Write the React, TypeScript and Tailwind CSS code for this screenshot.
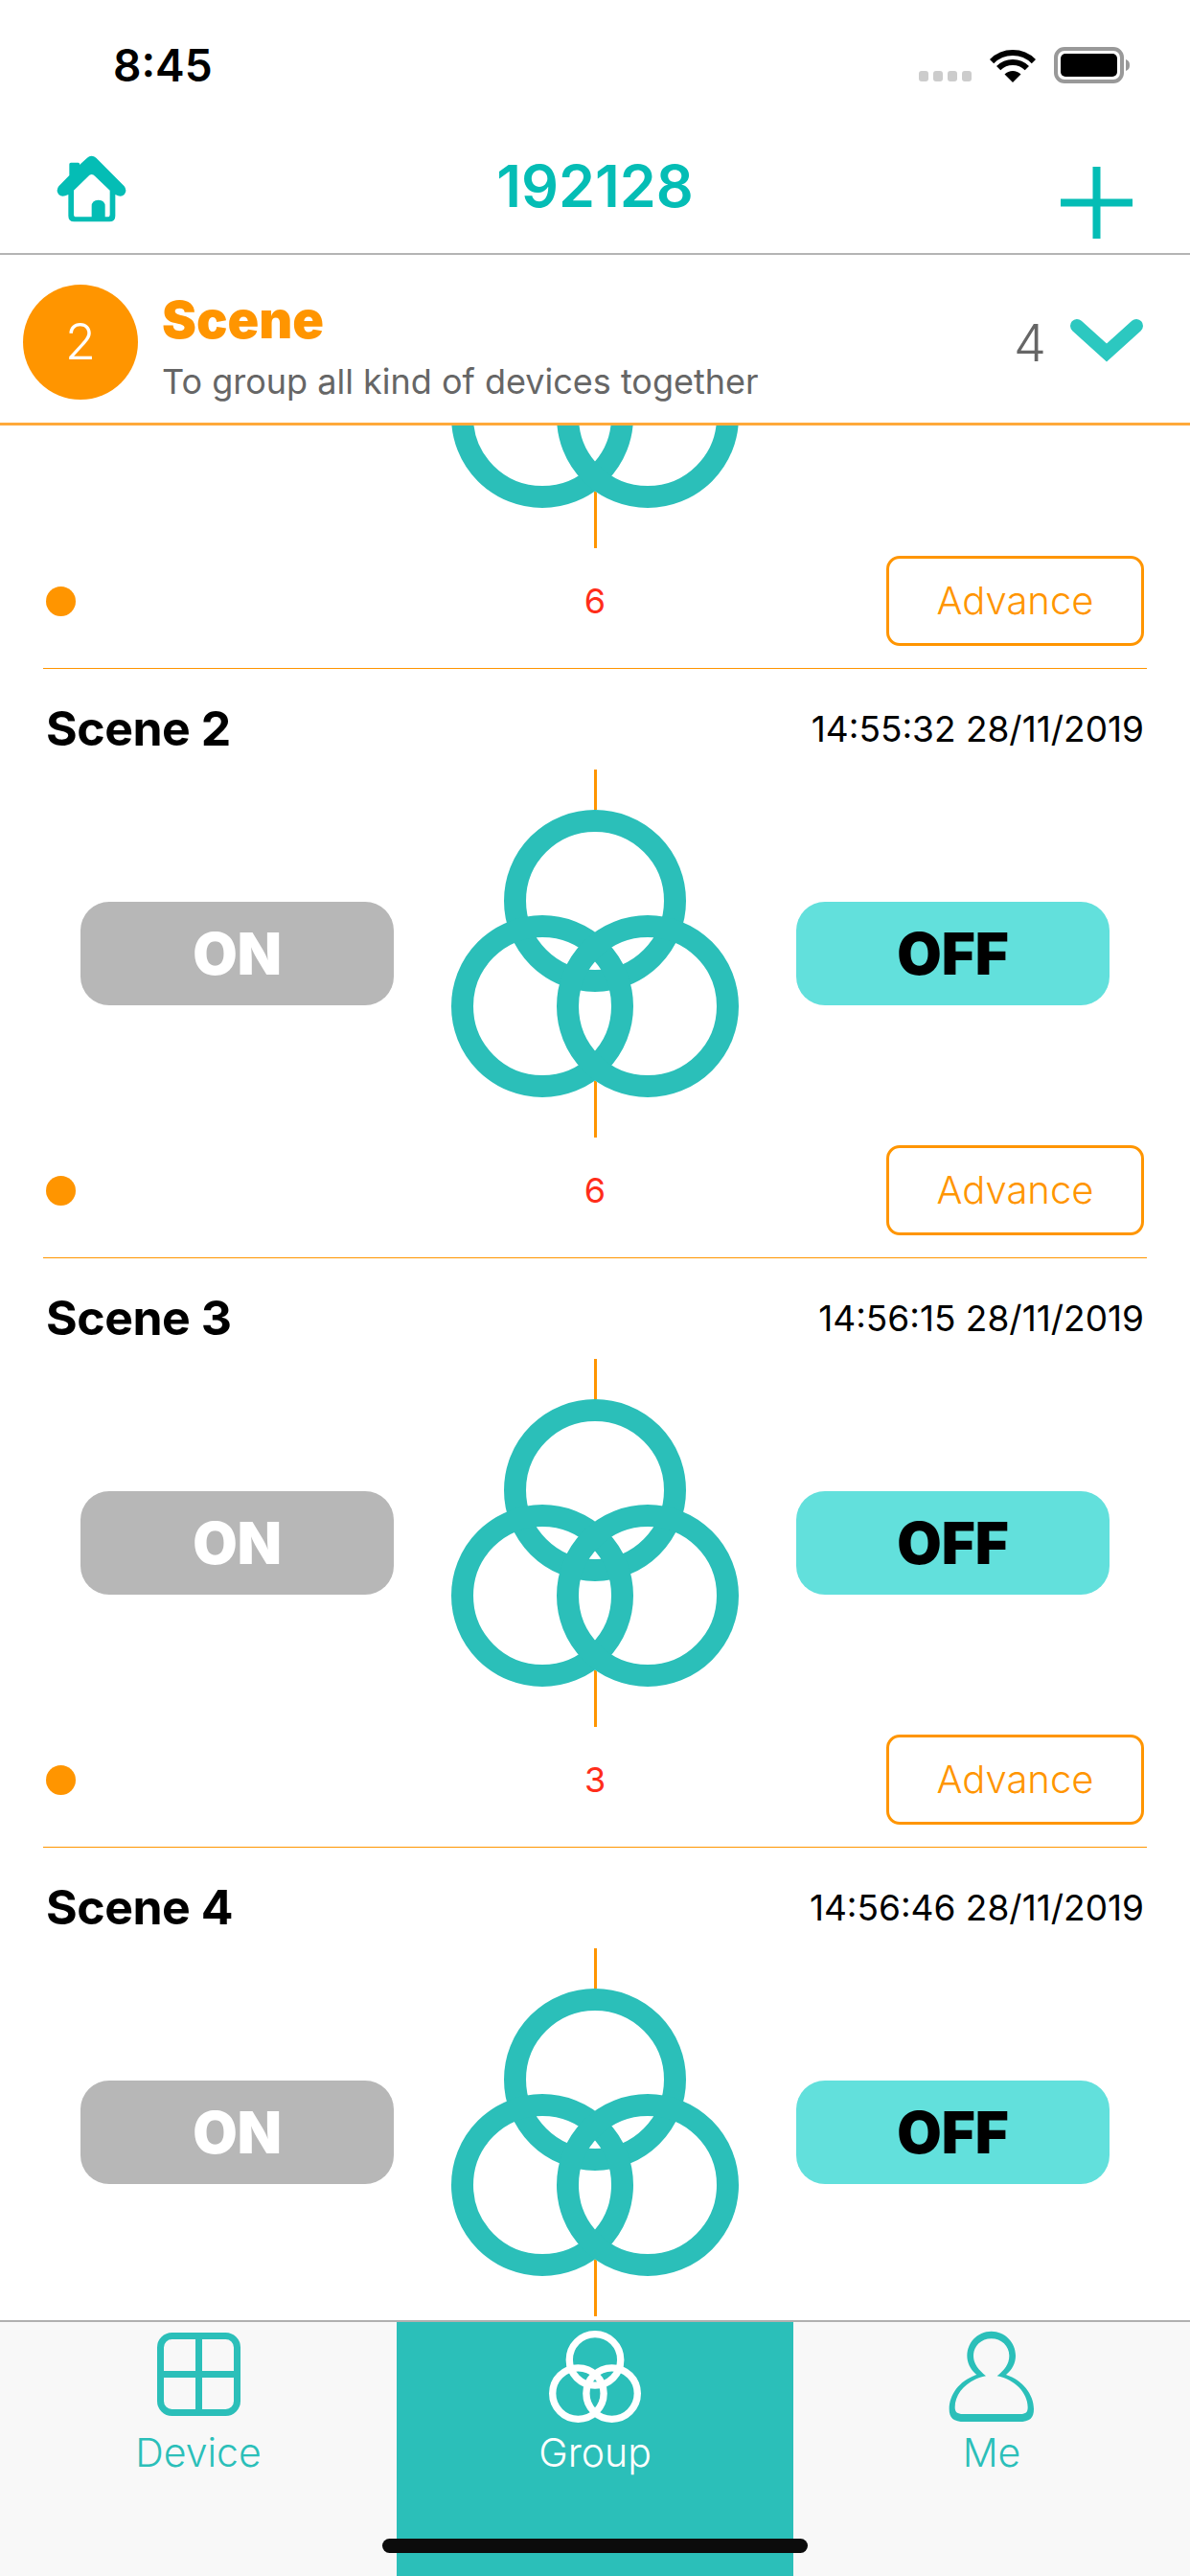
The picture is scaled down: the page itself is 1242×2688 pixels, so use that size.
import React from "react";

// the list is scrolled: the first row only shows its lower part, the last one its upper part
const scenes = [
  { name: "", time: "", count: 6, showHead: false, showFoot: true },
  { name: "Scene 2", time: "14:55:32 28/11/2019", count: 6, showHead: true, showFoot: true },
  { name: "Scene 3", time: "14:56:15 28/11/2019", count: 3, showHead: true, showFoot: true },
  { name: "Scene 4", time: "14:56:46 28/11/2019", count: 0, showHead: true, showFoot: false },
];

function Rings({ color, className }: { color: string; className?: string }) {
  return (
    <svg viewBox="0 0 300 300" fill="none" stroke={color} strokeWidth="23" className={className}>
      <circle cx="150" cy="95" r="83.5" />
      <circle cx="95" cy="205" r="83.5" />
      <circle cx="205" cy="205" r="83.5" />
    </svg>
  );
}

function StatusBar() {
  return (
    <div className="h-[135px] flex items-center justify-between pl-[118px] pr-[62px]">
      <span className="text-[46px] font-semibold text-black leading-none">8:45</span>
      <div className="flex items-center gap-[19px]">
        <div className="flex gap-[5px] mt-[24px]">
          {[0, 1, 2, 3].map((i) => (
            <div key={i} className="w-[10px] h-[11px] rounded-[3px] bg-[#cccccc]" />
          ))}
        </div>
        <svg viewBox="0 0 48 36" className="w-[48px] h-[36px]">
          <path d="M24 36 L15.5 27.5 A12 12 0 0 1 32.5 27.5Z" fill="#000" />
          <path d="M9.15 21.15 A21 21 0 0 1 38.85 21.15" fill="none" stroke="#000" strokeWidth="6" />
          <path d="M2.1 14.1 A31 31 0 0 1 45.9 14.1" fill="none" stroke="#000" strokeWidth="6" />
        </svg>
        <svg viewBox="0 0 80 38" className="w-[80px] h-[38px]">
          <rect x="2" y="2" width="69" height="34" rx="9" fill="none" stroke="#999999" strokeWidth="4" />
          <rect x="7" y="7" width="59" height="24" rx="5" fill="#000" />
          <path d="M75 13 C78 14 79 16 79 19 C79 22 78 24 75 25Z" fill="#999999" />
        </svg>
      </div>
    </div>
  );
}

function NavBar() {
  return (
    <div className="h-[131px] grid grid-cols-3 border-b-[2px] border-[#b4b4b4]">
      <div className="pl-[58px] pt-[27px]">
        <svg viewBox="85 95 225 210" className="w-[75px] h-[70px]">
          <path
            fillRule="evenodd"
            fill="#04bdb5"
            d="M198 97 Q190 97 184 103 L160 125 L160 122 Q160 118 155 118 L133 118 Q128 118 128 123 L128 158 L95 192 Q85 205 95 218 Q105 228 125 218 L125 285 Q125 303 143 303 L254 303 Q272 303 272 285 L272 218 Q290 228 300 218 Q310 205 300 192 L212 103 Q205 97 198 97Z M198 155 Q192 155 188 160 L142 205 L142 280 Q142 288 150 288 L198 288 L198 255 Q198 235 219 235 Q240 235 240 255 L240 288 L248 288 Q255 288 255 280 L255 205 L208 160 Q204 155 198 155Z"
          />
        </svg>
      </div>
      <div className="text-center text-[61px] font-semibold text-[#04bdb5] leading-none pt-[29px]">192128</div>
      <div className="flex justify-end pr-[60px] pt-[39px]">
        <svg viewBox="0 0 75 75" className="w-[75px] h-[75px]" stroke="#04bdb5" strokeWidth="8">
          <path d="M0 37.5 H75 M37.5 0 V75" />
        </svg>
      </div>
    </div>
  );
}

function SectionHeader() {
  return (
    <div className="h-[178px] flex items-center pt-[6px] pl-[24px] pr-[48px] border-b-[3px] border-[#ffa93a]">
      <div className="w-[120px] h-[120px] rounded-full bg-[#ff9500] flex items-center justify-center text-[52px] font-light text-white leading-none">
        2
      </div>
      <div className="ml-[25px] mt-[11px] flex-1 flex flex-col">
        <span className="text-[54px] font-black text-[#ff9500] leading-[60px]">Scene</span>
        <span className="text-[36px] text-[#666666] leading-[46px] mt-[11px]">To group all kind of devices together</span>
      </div>
      <span className="text-[54px] font-light text-[#666666] leading-none mt-[2px]">4</span>
      <svg viewBox="0 0 78 47" className="w-[78px] h-[47px] ml-[24px] mb-[2px]">
        <path d="M8 8 L39 36 L70 8" fill="none" stroke="#2cc8c0" strokeWidth="14" strokeLinecap="round" />
      </svg>
    </div>
  );
}

function SceneRow({
  name,
  time,
  count,
  showHead,
  showFoot,
}: {
  name: string;
  time: string;
  count: number;
  showHead: boolean;
  showFoot: boolean;
}) {
  return (
    <div className="h-[615px] mx-[45px] flex flex-col border-b-[1px] border-[#ff9500]">
      <div className="h-[105px] pt-[20px] px-[3px] flex items-center justify-between">
        {showHead && <span className="text-[50px] font-bold text-black tracking-[-0.5px]">{name}</span>}
        {showHead && <span className="text-[37px] text-black">{time}</span>}
      </div>
      <div className="h-[384px] px-[39px] flex items-center justify-between">
        <div className="w-[327px] h-[108px] rounded-[30px] bg-[#b7b7b7] flex items-center justify-center text-[60px] font-black text-white">
          {showHead && "ON"}
        </div>
        <div className="relative w-[300px] h-[384px]">
          <div className="absolute left-[149px] top-0 w-[3px] h-[384px] bg-[#ff9500]" />
          <div className="absolute left-0 top-[42px] w-[300px] h-[300px]">
            <svg viewBox="0 0 300 300" className="absolute inset-0 w-full h-full" fill="#fff">
              <circle cx="150" cy="95" r="95" />
              <circle cx="95" cy="205" r="95" />
              <circle cx="205" cy="205" r="95" />
            </svg>
            <Rings color="#2bbfb9" className="absolute inset-0 w-full h-full" />
          </div>
        </div>
        <div className="w-[327px] h-[108px] rounded-[30px] bg-[#62e0dc] flex items-center justify-center text-[60px] font-black text-black">
          {showHead && "OFF"}
        </div>
      </div>
      {showFoot && (
        <div className="flex-1 grid grid-cols-3 items-center px-[3px] pb-[15px]">
          <div className="w-[31px] h-[31px] rounded-full bg-[#ff9500]" />
          <div className="text-center text-[36px] text-[#ff2d1a]">{count}</div>
          <div className="justify-self-end w-[269px] h-[94px] rounded-[14px] border-[3px] border-[#ff9500] flex items-center justify-center text-[40px] font-light text-[#ff9500]">
            Advance
          </div>
        </div>
      )}
    </div>
  );
}

function TabBar() {
  return (
    <div className="relative h-[267px] bg-[#f8f8f8] border-t-[2px] border-[#b0b0b0] grid grid-cols-3">
      <div className="flex flex-col items-center">
        <div className="h-[108px] flex items-center justify-center">
          <svg viewBox="0 0 87 87" className="w-[87px] h-[87px]" fill="none" stroke="#2bbfb9" strokeWidth="7">
            <rect x="3.5" y="3.5" width="80" height="80" rx="12" />
            <path d="M43.5 3.5 V83.5 M3.5 43.5 H83.5" />
          </svg>
        </div>
        <span className="text-[41px] font-light leading-[40px] mt-[8px] text-[#2bbfb9]">Device</span>
      </div>
      <div className="flex flex-col items-center bg-[#2bbfb9]">
        <div className="h-[108px] pt-[5px] flex items-center justify-center">
          <Rings color="#ffffff" className="w-[96px] h-[96px]" />
        </div>
        <span className="text-[41px] font-light leading-[40px] mt-[8px] text-white">Group</span>
      </div>
      <div className="flex flex-col items-center">
        <div className="h-[108px] pt-[5px] flex items-center justify-center">
          <svg viewBox="90 55 270 288" className="w-[90px] h-[96px]">
            <path
              fillRule="evenodd"
              fill="#2bbfb9"
              d="M224 57 C182 57 148 91 148 133 C148 158 160 178 178 193 C125 210 92 255 92 300 C92 328 105 340 140 340 L310 340 C345 340 357 328 357 300 C357 255 322 210 270 193 C288 178 300 158 300 133 C300 91 266 57 224 57Z M224 80 C193 80 168 103 168 133 C168 160 185 178 207 197 C150 208 110 250 110 295 C110 310 118 316 135 316 L315 316 C332 316 338 310 338 295 C338 250 298 208 242 197 C265 178 280 160 280 133 C280 103 255 80 224 80Z"
            />
          </svg>
        </div>
        <span className="text-[41px] font-light leading-[40px] mt-[8px] text-[#2bbfb9]">Me</span>
      </div>
      {/* home indicator */}
      <div className="absolute left-[399px] bottom-[24px] w-[444px] h-[15px] rounded-full bg-[#0c0c0c]" />
    </div>
  );
}

export default function App() {
  return (
    <div className="w-[1242px] h-[2688px] bg-white flex flex-col overflow-hidden font-['Inter',sans-serif]">
      <StatusBar />
      <NavBar />
      <SectionHeader />
      <div className="flex-1 overflow-hidden">
        <div className="-mt-[361px]">
          {scenes.map((s, i) => (
            <SceneRow key={i} {...s} />
          ))}
        </div>
      </div>
      <TabBar />
    </div>
  );
}
